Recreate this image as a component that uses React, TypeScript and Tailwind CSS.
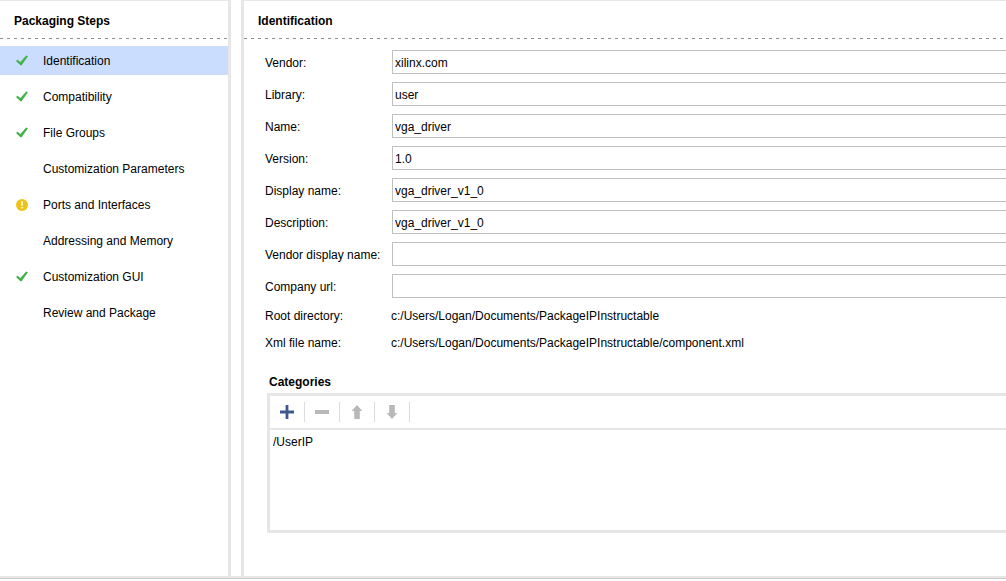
import type { ReactNode } from "react";

type StepStatus = "done" | "warning" | "none";

const steps: { label: string; status: StepStatus }[] = [
  { label: "Identification", status: "done" },
  { label: "Compatibility", status: "done" },
  { label: "File Groups", status: "done" },
  { label: "Customization Parameters", status: "none" },
  { label: "Ports and Interfaces", status: "warning" },
  { label: "Addressing and Memory", status: "none" },
  { label: "Customization GUI", status: "done" },
  { label: "Review and Package", status: "none" },
];

const fields = [
  { id: "vendor", label: "Vendor:", value: "xilinx.com" },
  { id: "library", label: "Library:", value: "user" },
  { id: "name", label: "Name:", value: "vga_driver" },
  { id: "version", label: "Version:", value: "1.0" },
  { id: "display-name", label: "Display name:", value: "vga_driver_v1_0" },
  { id: "description", label: "Description:", value: "vga_driver_v1_0" },
  { id: "vendor-display-name", label: "Vendor display name:", value: "" },
  { id: "company-url", label: "Company url:", value: "" },
];

const paths = [
  { label: "Root directory:", value: "c:/Users/Logan/Documents/PackageIPInstructable" },
  { label: "Xml file name:", value: "c:/Users/Logan/Documents/PackageIPInstructable/component.xml" },
];

function StatusIcon({ status }: { status: StepStatus }) {
  if (status === "done") {
    return (
      <svg className="h-3 w-3" viewBox="0 0 12 12">
        <path d="M0 6 1.4 4.8 4.4 7 10.2 0.4 12 1.2 5.6 10.2H4.4z" fill="#41b349" />
      </svg>
    );
  }
  if (status === "warning") {
    return (
      <svg className="h-3 w-3" viewBox="0 0 12 12">
        <circle cx="6" cy="6" r="6" fill="#ecc31b" />
        <path d="M5 2.2h2v4.6H5zM5 8h2v1.6H5z" fill="#fff3b8" />
      </svg>
    );
  }
  return null;
}

function PanelHeader({ children }: { children: ReactNode }) {
  return (
    <>
      <h2 className="px-3.5 pt-3 pb-[9px] font-bold">{children}</h2>
      <div className="h-px bg-[repeating-linear-gradient(90deg,#8c8c8c_0_3px,transparent_3px_7px)]" />
    </>
  );
}

function ToolButton({ label, disabled, children }: { label: string; disabled?: boolean; children: ReactNode }) {
  return (
    <button
      type="button"
      aria-label={label}
      disabled={disabled}
      className="flex h-5 w-[35px] items-center justify-center border-r border-[#dcdcdc]"
    >
      <svg className="h-3.5 w-3.5" viewBox="0 0 14 14">
        {children}
      </svg>
    </button>
  );
}

export default function App() {
  return (
    <div className="flex h-screen flex-col bg-white pb-0.5 font-['Liberation_Sans',Arial,sans-serif] text-[12px] leading-4 text-black">
      <div className="flex min-h-0 flex-1 gap-2.5 border-b-2 border-[#e6e6e6]">
        {/* Steps */}
        <nav className="w-[231px] shrink-0 border-t border-r-3 border-[#e6e6e6]">
          <PanelHeader>Packaging Steps</PanelHeader>
          <ul className="mt-[7px] flex flex-col gap-[7px]">
            {steps.map((step, i) => (
              <li key={step.label}>
                <button
                  type="button"
                  className={`flex h-[29px] w-full items-center pl-4 text-left ${i === 0 ? "bg-[#cbddff]" : ""}`}
                >
                  <span className="w-[27px]">
                    <StatusIcon status={step.status} />
                  </span>
                  {step.label}
                </button>
              </li>
            ))}
          </ul>
        </nav>

        {/* Details */}
        <main className="min-w-0 flex-1 overflow-hidden border-t border-l-3 border-[#e6e6e6]">
          <PanelHeader>Identification</PanelHeader>

          <form className="mt-[11px] flex flex-col gap-2 pl-[21px]">
            {fields.map((field) => (
              <div key={field.id} className="flex h-6 items-center">
                <label htmlFor={field.id} className="w-[127px] shrink-0 pt-px">
                  {field.label}
                </label>
                <input
                  id={field.id}
                  type="text"
                  defaultValue={field.value}
                  className="h-6 min-w-0 flex-1 border border-r-0 border-[#c0c0c0] pt-px pl-0.5 outline-none"
                />
              </div>
            ))}
          </form>

          <dl className="mt-[10px] flex flex-col gap-[11px] pl-[21px]">
            {paths.map((path) => (
              <div key={path.label} className="flex">
                <dt className="w-[126px] shrink-0">{path.label}</dt>
                <dd>{path.value}</dd>
              </div>
            ))}
          </dl>

          {/* Categories */}
          <section className="mt-[23px] pl-[23px]">
            <h3 className="px-0.5 font-bold">Categories</h3>
            <div className="mt-[3px] border-3 border-r-0 border-[#e6e6e6]">
              <div className="flex h-[34px] items-center border-b-2 border-[#e6e6e6]">
                <ToolButton label="Add category">
                  <path d="M5.6 0h2.8v5.6H14v2.8H8.4V14H5.6V8.4H0V5.6h5.6z" fill="#3c588e" />
                </ToolButton>
                <ToolButton label="Remove category" disabled>
                  <path d="M0 5h14v4H0z" fill="#b8b8b8" />
                </ToolButton>
                <ToolButton label="Move up" disabled>
                  <path d="M7 0 12.4 6H9.8v8H4.2V6H1.6z" fill="#b8b8b8" />
                </ToolButton>
                <ToolButton label="Move down" disabled>
                  <path d="M7 14 1.6 8h2.6V0h5.6v8h2.6z" fill="#b8b8b8" />
                </ToolButton>
              </div>
              <ul className="h-[100px] px-[3px] py-1">
                <li>/UserIP</li>
              </ul>
            </div>
          </section>
        </main>
      </div>
      <div className="h-px bg-[#cbcbcb]" />
    </div>
  );
}
